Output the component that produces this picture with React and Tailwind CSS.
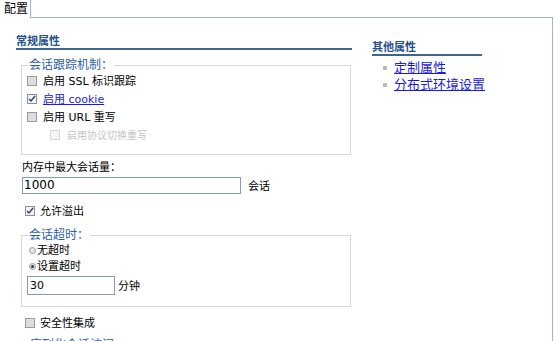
import React from "react";

// small square checkbox, drawn like the old console style
function Box({ checked, disabled }) {
  const tone = disabled
    ? "border-[#d6d6d6] bg-[#f5f5f5]"
    : checked
    ? "border-[#8f8f8f] bg-[#f2f2f2]"
    : "border-[#9a9a9a] bg-[#dedede]";
  return (
    <span className={`flex w-[10px] h-[10px] shrink-0 items-center justify-center border ${tone}`}>
      {checked && (
        <svg width="8" height="8" viewBox="0 0 8 8">
          <path d="M1 4 L3 6 L7 1" fill="none" stroke="#23408e" strokeWidth="1.4" />
        </svg>
      )}
    </span>
  );
}

function Radio({ on }) {
  return (
    <span className="flex w-[7px] h-[7px] shrink-0 items-center justify-center rounded-full border border-[#9a9a9a] bg-[#e6e6e6]">
      {on && <span className="w-[3px] h-[3px] rounded-full bg-[#1f2f6e]" />}
    </span>
  );
}

const Check = ({ label, checked, link }) => (
  <div className="flex h-[18px] items-center gap-[6px]">
    <Box checked={checked} />
    <span className={link ? "text-[#1a1ae6] underline" : ""}>{label}</span>
  </div>
);

export default function App() {
  return (
    <div className="w-[555px] h-[341px] overflow-hidden bg-white text-[11px] leading-[13px] text-black font-['DejaVu_Sans','Noto_Sans_CJK_SC',sans-serif]">
      <div className="w-[553px]">
        {/* tab strip */}
        <div className="flex h-[18px]">
          <div className="w-[31px] border-r border-[#9fb3d9] pl-[4px] pt-[2px] text-[12px] leading-[14px]">配置</div>
          <div className="flex-1 border-b border-[#9fb3d9]" />
        </div>

        <div className="flex h-[323px] border-r border-[#9fb3d9]">
          {/* general properties */}
          <div className="ml-[16px] w-[336px]">
            <div className="mt-[17px] h-[15px] border-b-2 border-[#3d6590] font-bold text-[#24508c]">常规属性</div>

            <fieldset className="mt-[8px] ml-[5px] w-[330px] border border-[#d8d8d8] px-[5px] pb-[10px]">
              <legend className="ml-[1px] px-[1px] text-[12px] leading-[14px] text-[#2d5fa6]">会话跟踪机制：</legend>
              <Check label="启用 SSL 标识跟踪" />
              <Check label="启用 cookie" checked link />
              <Check label="启用 URL 重写" />
              <div className="flex h-[18px] items-center gap-[7px] pl-[23px] text-[10px] text-[#c4c4c4]">
                <Box disabled />
                <span>启用协议切换重写</span>
              </div>
            </fieldset>

            <div className="mt-[6px] ml-[6px]">内存中最大会话量：</div>
            <div className="mt-[3px] ml-[6px] flex items-center gap-[7px]">
              <div className="w-[219px] h-[17px] border border-[#7f9db9] bg-white pl-[1px] text-[12px] leading-[15px]">1000</div>
              <span className="pt-[2px]">会话</span>
            </div>

            <div className="mt-[10px] ml-[9px] flex h-[14px] items-center gap-[5px]">
              <Box checked />
              <span>允许溢出</span>
            </div>

            <fieldset className="mt-[10px] ml-[5px] w-[330px] border border-[#d8d8d8] px-[5px] pb-[11px]">
              <legend className="ml-[1px] px-[1px] text-[12px] leading-[14px] text-[#2d5fa6]">会话超时：</legend>
              <div className="flex h-[16px] items-center gap-[1px] pl-[2px]">
                <Radio />
                <span>无超时</span>
              </div>
              <div className="flex h-[16px] items-center gap-[1px] pl-[2px]">
                <Radio on />
                <span>设置超时</span>
              </div>
              <div className="mt-[2px] flex items-center gap-[3px]">
                <div className="w-[88px] h-[19px] border border-[#7f9db9] bg-white pl-[2px] text-[11px] leading-[17px]">30</div>
                <span className="pt-[2px]">分钟</span>
              </div>
            </fieldset>

            <div className="mt-[9px] ml-[9px] flex h-[14px] items-center gap-[5px]">
              <Box />
              <span>安全性集成</span>
            </div>

            <div className="mt-[8px] ml-[14px] text-[12px] leading-[14px] text-[#2d5fa6]">序列化会话访问</div>
          </div>

          {/* other properties */}
          <div className="ml-[20px] w-[110px]">
            <div className="mt-[23px] h-[15px] border-b-2 border-[#3d6590] font-bold text-[#24508c]">其他属性</div>
            <ul className="mt-[3px] text-[13px] leading-[17px]">
              <li className="flex items-center gap-[7px] pl-[11px]">
                <span className="w-[4px] h-[4px] shrink-0 bg-[#b8b8b8]" />
                <span className="text-[#1a1ae6] underline whitespace-nowrap">定制属性</span>
              </li>
              <li className="flex items-center gap-[7px] pl-[11px]">
                <span className="w-[4px] h-[4px] shrink-0 bg-[#b8b8b8]" />
                <span className="text-[#1a1ae6] underline whitespace-nowrap">分布式环境设置</span>
              </li>
            </ul>
          </div>
        </div>
      </div>
    </div>
  );
}
